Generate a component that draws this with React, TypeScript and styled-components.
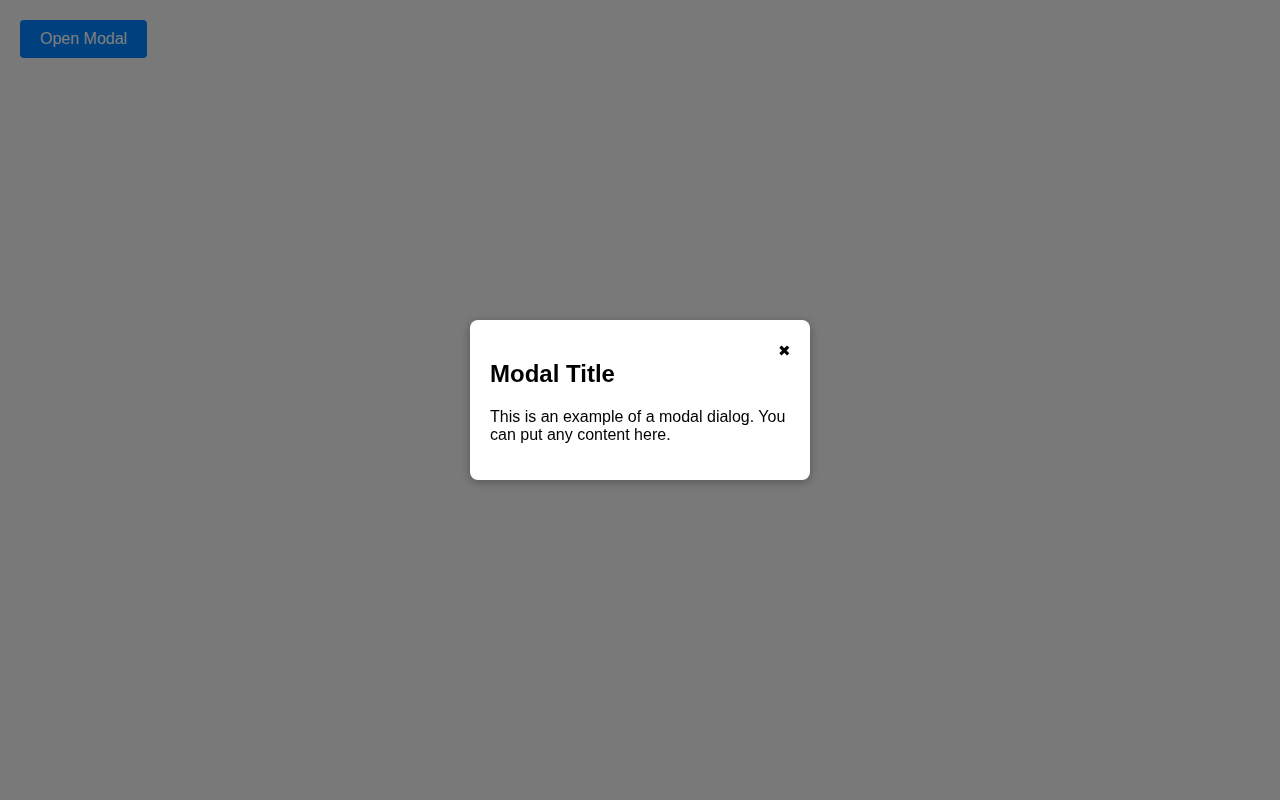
import styled, { createGlobalStyle } from "styled-components";

const GlobalStyle = createGlobalStyle`
    body {
        margin: 0;
        background-color: #f2f2f2;
        font-family: "Liberation Sans", Arial, sans-serif;
    }
`

export default function App() {
    return (
        <>
            <GlobalStyle/>
            <Page>
                <OpenButton>Open Modal</OpenButton>
            </Page>
            <Overlay>
                <ModalBox role="dialog">
                    <CloseButton aria-label="Close">✖</CloseButton>
                    <Title>Modal Title</Title>
                    <Text>This is an example of a modal dialog. You can put any content here.</Text>
                </ModalBox>
            </Overlay>
        </>
    );
}

const Page = styled.main`
    min-height: 100vh;
    padding: 20px;
    box-sizing: border-box;
`

const OpenButton = styled.button`
    padding: 10px 20px;
    font-family: inherit;
    font-size: 16px;
    color: #fff;
    background-color: #0080ff;
    border: none;
    border-radius: 4px;
    cursor: pointer;
`

const Overlay = styled.div`
    position: fixed;
    inset: 0;
    background-color: rgba(0, 0, 0, 0.5);
    display: flex;
    align-items: center;
    justify-content: center;
`

const ModalBox = styled.div`
    position: relative;
    width: 340px;
    box-sizing: border-box;
    padding: 20px;
    background-color: #fff;
    border-radius: 8px;
    box-shadow: 0 2px 10px rgba(0, 0, 0, 0.3);
`

const CloseButton = styled.button`
    position: absolute;
    top: 18px;
    right: 11px;
    padding: 4px 8px;
    background: none;
    border: none;
    font-size: 15px;
    color: #000;
    cursor: pointer;
`

const Title = styled.h2`
    margin: 20px 0;
    font-size: 24px;
`

const Text = styled.p`
    margin: 16px 0;
    font-size: 16px;
`
